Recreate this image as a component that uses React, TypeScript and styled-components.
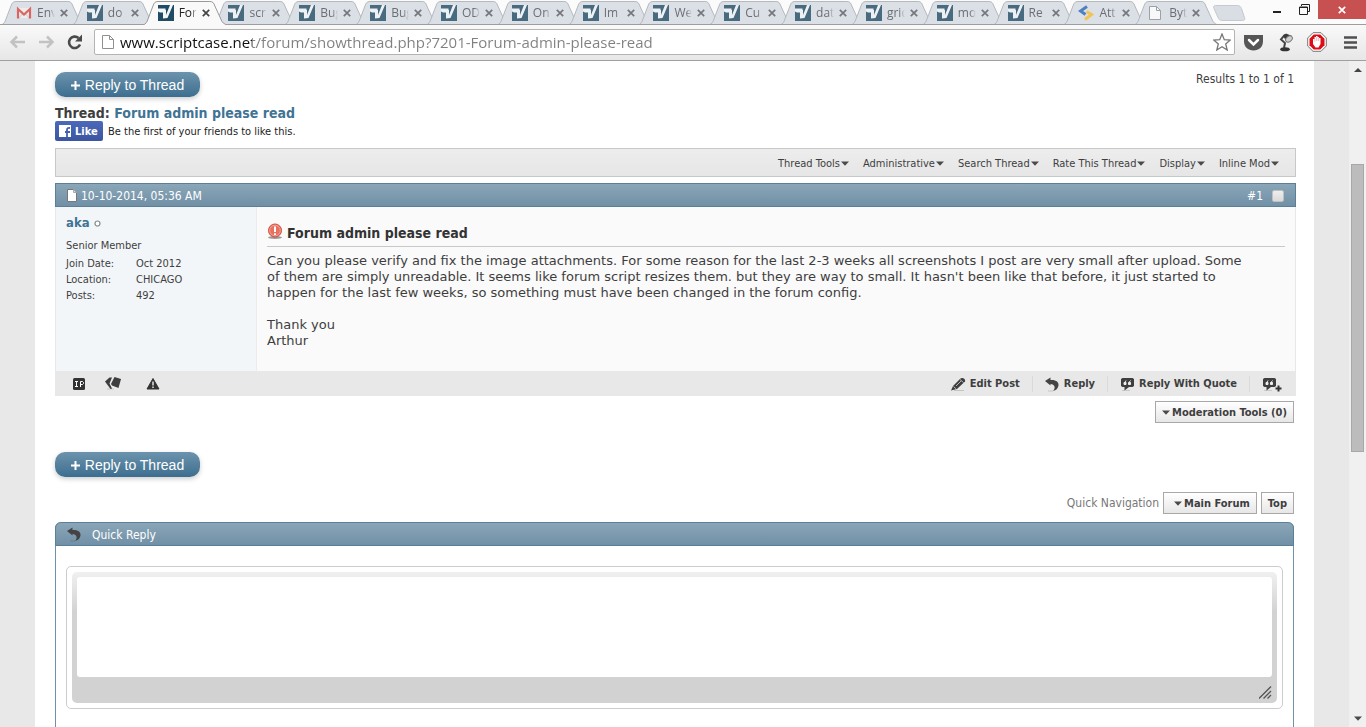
import React from "react";
import styled, { createGlobalStyle, css } from "styled-components";

const ui = '"Open Sans", "Noto Sans", sans-serif';
const tahoma = '"DejaVu Sans Condensed", "DejaVu Sans", sans-serif';
const verdana = '"DejaVu Sans", sans-serif';
const arial = '"Liberation Sans", Arial, sans-serif';

const GlobalStyle = createGlobalStyle`
  *, *::before, *::after { box-sizing: border-box; }
  body { margin: 0; font-family: ${tahoma}; font-size: 11px; color: #3e3e3e; }
  button, input, textarea { font: inherit; color: inherit; margin: 0; }
  button { border: 0; padding: 0; background: none; cursor: pointer; white-space: nowrap; }
  a { color: inherit; text-decoration: none; }
  svg { display: block; flex: none; }
  h1, h2, p, dl, dd, ul { margin: 0; padding: 0; }
`;

/* ---------- Browser frame ---------- */

const Window = styled.div`
  height: 100vh;
  display: flex;
  flex-direction: column;
  overflow: hidden;
  background: #fbfbfb;
`;

const TitleBar = styled.header`
  display: flex;
  height: 25px;
  flex: none;
  border-bottom: 1px solid #9d9d9d;
`;

const TabStrip = styled.nav`
  display: flex;
  flex: 1 1 0;
  max-width: 1205px;
  padding-left: 1px;
`;

const Tab = styled.div<{ $active?: boolean }>`
  position: relative;
  display: flex;
  align-items: center;
  flex: 1 1 0;
  min-width: 0;
  height: 25px;
  padding: 1px 0 0 15px;
  z-index: ${(p) => (p.$active ? 2 : 0)};
  color: ${(p) => (p.$active ? "#222" : "#6b6e74")};
`;

const TabShape = styled.svg`
  position: absolute;
  left: 0;
  top: 0;
  width: calc(100% + 14px);
  height: 25px;
`;

const TabIcon = styled.span<{ $dim?: boolean }>`
  position: relative;
  opacity: ${(p) => (p.$dim ? 0.78 : 1)};
`;

const TabTitle = styled.button<{ $indent?: boolean }>`
  position: relative;
  width: 23px;
  margin-left: ${(p) => (p.$indent ? 8 : 5)}px;
  text-align: left;
  font-family: ${ui};
  font-size: 12px;
  line-height: 18px;
  mask-image: linear-gradient(90deg, #000 12px, transparent 18px);
`;

const TabClose = styled.button`
  position: relative;
`;

const NewTab = styled.button`
  height: 20px;
  margin: 3px 0 0 7px;
`;

const WindowControls = styled.div`
  display: flex;
  margin-left: auto;
`;

const WindowButton = styled.button<{ $close?: boolean }>`
  display: flex;
  align-items: center;
  justify-content: center;
  width: ${(p) => (p.$close ? 48 : 27)}px;
  height: 19px;
  background: ${(p) => (p.$close ? "#c75050" : "transparent")};
`;

const NavBar = styled.div`
  display: flex;
  align-items: center;
  flex: none;
  height: 36px;
  padding: 0 9px 1px;
  background: linear-gradient(#f9f9f9, #e7e7e7);
  border-bottom: 1px solid #a0a0a0;
`;

const NavButton = styled.button`
  margin-right: 12px;
`;

const AddressBar = styled.label`
  display: flex;
  align-items: center;
  flex: 1;
  height: 26px;
  padding: 0 3px 0 7px;
  gap: 6px;
  background: #fff;
  border: 1px solid #b4b4b4;
  border-radius: 2px;
`;

const AddressInput = styled.input`
  flex: 1;
  min-width: 0;
  height: 24px;
  padding: 0;
  border: 0;
  outline: 0;
  font-family: ${ui};
  font-size: 15px;
  color: transparent;
  background: linear-gradient(90deg, #111 132px, #808080 132px);
  background-clip: text;
  -webkit-background-clip: text;
`;

const Extensions = styled.div`
  display: flex;
  align-items: center;
  gap: 13px;
  margin-left: 9px;
`;

const MainMenu = styled.button`
  margin-left: 4px;
`;

const Viewport = styled.div`
  display: flex;
  flex: 1;
  min-height: 0;
  background: #e8e8e8;
`;

const Scrollbar = styled.div`
  display: flex;
  flex-direction: column;
  align-items: center;
  flex: none;
  width: 17px;
  background: #f0f0f0;
`;

const ScrollArrow = styled.button`
  display: flex;
  align-items: center;
  justify-content: center;
  width: 17px;
  height: 17px;
`;

const ScrollSpace = styled.div<{ $grow: number }>`
  flex: ${(p) => p.$grow} 1 0;
`;

const ScrollThumb = styled.div`
  flex: 287 1 0;
  width: 13px;
  background: #bcbcbc;
  border: 1px solid #a8a8a8;
`;

/* ---------- Forum page ---------- */

const Page = styled.main`
  flex: 1;
  min-width: 0;
  margin: 0 35px;
  padding: 11px 20px 0;
  background: #fff;
  overflow: hidden;
`;

const Row = styled.div<{ $end?: boolean }>`
  display: flex;
  align-items: flex-start;
  justify-content: ${(p) => (p.$end ? "flex-end" : "space-between")};
`;

const ReplyButton = styled.button`
  display: flex;
  align-items: center;
  justify-content: center;
  gap: 5px;
  width: 145px;
  height: 25px;
  padding-top: 1px;
  border-radius: 10px;
  background: linear-gradient(#6c93ad, #3d6e8f);
  box-shadow: 0 2px 5px rgba(0, 0, 0, 0.2);
  color: #fff;
  font-family: ${arial};
  font-size: 14px;
`;

const Results = styled.span`
  font-size: 12px;
  line-height: 14px;
`;

const ThreadTitle = styled.h1`
  margin-top: 8px;
  font-size: 14px;
  line-height: 16px;
  font-weight: bold;

  a { color: #417394; }
`;

const LikeRow = styled.div`
  display: flex;
  align-items: center;
  gap: 5px;
  height: 20px;
  color: #222;
`;

const LikeButton = styled.button`
  display: flex;
  align-items: center;
  gap: 4px;
  width: 48px;
  height: 20px;
  padding-left: 4px;
  border-radius: 2px;
  background: linear-gradient(#4c69ba, #3b55a0);
  color: #fff;
  font-size: 11px;
  font-weight: bold;
`;

const Toolbar = styled.div`
  display: flex;
  align-items: center;
  justify-content: flex-end;
  gap: 14px;
  height: 29px;
  margin: 7px -2px 6px 0;
  padding: 2px 16px 0 0;
  border: 1px solid #c8c8c8;
  background: linear-gradient(#ededed, #e6e6e6);
`;

const MenuButton = styled.button`
  display: flex;
  align-items: center;
  gap: 1px;
`;

const barStyle = css`
  display: flex;
  align-items: center;
  height: 24px;
  border: 1px solid #5a7f97;
  background: linear-gradient(#8aa6b8, #7190a6);
  color: #fff;
  font-size: 12px;
`;

const Post = styled.article`
  margin-right: -2px;
`;

const PostHead = styled.div`
  ${barStyle}
  padding: 1px 11px 0;
  gap: 4px;
`;

const PostNumber = styled.a`
  margin: 0 5px 0 auto;
`;

const SelectBox = styled.input`
  appearance: none;
  width: 12px;
  height: 12px;
  border: 1px solid #c0c0c0;
  border-radius: 2px;
  background: linear-gradient(#eee, #dadada);
`;

const PostBody = styled.div`
  display: flex;
  min-height: 164px;
  border: solid #e8e8e8;
  border-width: 0 1px;
  background: #fafafa;
`;

const UserInfo = styled.aside`
  flex: none;
  width: 201px;
  padding: 8px 10px;
  border-right: 1px solid #ececec;
  background: #f2f6f9;
`;

const UserName = styled.a`
  display: flex;
  align-items: center;
  gap: 4px;
  color: #417394;
  font-size: 13px;
  line-height: 16px;
  font-weight: bold;
`;

const UserTitle = styled.p`
  margin: 7px 0 2px;
  line-height: 16px;
`;

const UserStats = styled.dl`
  display: grid;
  grid-template-columns: 70px 1fr;
  line-height: 16px;
`;

const PostContent = styled.div`
  flex: 1;
  min-width: 0;
  padding: 14px 10px 0;
`;

const PostTitle = styled.h2`
  display: flex;
  align-items: center;
  gap: 4px;
  height: 26px;
  padding-bottom: 1px;
  margin-bottom: 6px;
  border-bottom: 1px solid #c8c8c8;
  color: #333;
  font-size: 14px;
`;

const Message = styled.p`
  font-family: ${verdana};
  font-size: 13px;
  line-height: 16px;
  white-space: pre-line;
`;

const PostFoot = styled.div`
  display: flex;
  align-items: center;
  justify-content: space-between;
  height: 25px;
  padding: 0 14px 0 17px;
  background: #e8e8e8;
`;

const IconGroup = styled.div`
  display: flex;
  gap: 19px;
`;

const Actions = styled.div`
  display: flex;
  align-items: center;
`;

const Action = styled.button`
  display: flex;
  align-items: center;
  gap: 4px;
  padding: 1px 12px 0;
  border-right: 1px solid #dadada;
  font-weight: bold;
  line-height: 14px;

  &:last-child { padding-right: 0; border: 0; }
`;

const BoxButton = styled.button<{ $wide?: boolean }>`
  display: flex;
  align-items: center;
  gap: 2px;
  height: 22px;
  padding: 0 6px 0 ${(p) => (p.$wide ? 10 : 6)}px;
  border: 1px solid #a8a8a8;
  background: linear-gradient(#fff, #e7e7e7);
  font-weight: bold;
`;

const Moderation = styled(Row)`
  margin: 5px 0 29px;
`;

const QuickNav = styled(Row)`
  align-items: center;
  gap: 4px;
  margin: 15px 0 8px;
  color: #777;
  font-size: 12px;

  button { color: #3e3e3e; font-size: 11px; }
`;

const QuickReply = styled.section`
  min-height: 240px;
  border: solid #6f92a8;
  border-width: 0 1px;
  border-radius: 6px 6px 0 0;
`;

const QuickHead = styled.h2`
  ${barStyle}
  gap: 10px;
  margin: 0 -1px;
  padding: 1px 0 0 11px;
  border-radius: 6px 6px 0 0;
  font-weight: normal;
`;

const EditorFrame = styled.div`
  margin: 20px 10px;
  padding: 5px;
  border: 1px solid #ccc;
  border-radius: 5px;
`;

const Editor = styled.div`
  display: flex;
  flex-direction: column;
  padding: 5px 5px 0;
  border-radius: 5px;
  background: linear-gradient(#f0f0f0, #d2d2d2 40px);
`;

const EditorText = styled.textarea`
  display: block;
  width: 100%;
  height: 100px;
  padding: 4px;
  border: 0;
  outline: 0;
  border-radius: 3px;
  resize: none;
  background: #fff;
`;

const EditorFoot = styled.div`
  display: flex;
  align-items: center;
  justify-content: flex-end;
  height: 26px;
  padding-top: 4px;
`;

/* ---------- Drawings ---------- */

const Caret = () => (
  <svg width="8" height="5" viewBox="0 0 8 5"><path d="M0 .5h8L4 4.800z" fill="#4a4a4a" /></svg>
);

const Favicon = () => (
  <svg width="16" height="16" viewBox="0 0 16 16">
    <path d="M0 0h16v16H0z" fill="#1f4b64" />
    <path d="M0 3h8v7L12 0h3L9.500 13 5 13.500V7.500H2L0 6.500z" fill="#f4f7f9" />
    <path d="M0 0h11L9 5H7.500V3.500H0z" fill="#1f4b64" />
  </svg>
);

const Gmail = () => (
  <svg width="16" height="16" viewBox="0 0 16 16">
    <path d="M2 3h12v10H2z" fill="#f3efee" />
    <path d="M3 13l4-5M13 13L9 8" stroke="#c9c4c4" fill="none" />
    <path d="M2 13.500V4l6 5.500L14 4v9.500" stroke="#d9453c" strokeWidth="2.200" fill="none" />
  </svg>
);

const Sublime = () => (
  <svg width="16" height="16" viewBox="0 0 16 16" fill="none" strokeWidth="3">
    <path d="M9 1.500L2.500 6l5 3.500" stroke="#2466b8" />
    <path d="M8.500 6.500l5 3L7 14.500" stroke="#fbbc2c" />
  </svg>
);

const PageGlyph = ({ fill = "#fff", line = "#8f8f8f" }: { fill?: string; line?: string }) => (
  <svg width="12" height="16" viewBox="0 0 12 16">
    <path d="M.5 1.500h7l4 4v9H.5z" fill={fill} stroke={line} />
    <path d="M7.500 1.500v4h4" fill="none" stroke={line} />
  </svg>
);

const PostGlyph = () => (
  <svg width="10" height="13" viewBox="0 0 10 13">
    <path d="M.5.5h6l3 3v9h-9z" fill="#fff" stroke="#777" />
    <path d="M6.500.5v3h3" fill="#ddd" stroke="#aaa" />
  </svg>
);

const CloseGlyph = ({ color }: { color: string }) => (
  <svg width="8" height="8" viewBox="0 0 8 8">
    <path d="M.8.8l6.400 6.400M7.200.8L.8 7.200" stroke={color} strokeWidth="1.700" />
  </svg>
);

const ReplyArrow = () => (
  <svg width="15" height="15" viewBox="0 0 15 15">
    <path d="M3 14h5" stroke="#000" strokeOpacity=".15" />
    <path d="M0 4L5.500.5V3C11 2.500 14 5 13.500 8.500 13 11.500 11 13.500 8 14c2.500-2.500 2.500-6.500-2.500-7V8.500z" fill="#444" />
  </svg>
);

const QuoteGlyph = ({ plus }: { plus?: boolean }) => (
  <svg width={plus ? 20 : 15} height="15" viewBox={plus ? "0 0 20 15" : "0 0 15 15"}>
    <path d="M2 13.500h8" stroke="#cacaca" />
    <path d="M2.500 1h10L14 2v7l-1.500 1H9L4.500 13.500V10h-2L1 9V2z" fill="#3f3f3f" />
    <path d="M4 5.500h2v2H4zM6 3.500L4.700 5.500M8.500 5.500h2v2h-2zM10.500 3.500L9 5.500" fill="#eee" stroke="#eee" />
    {plus && <path d="M16.500 8.500v6M13.500 11.500h6" stroke="#333" strokeWidth="2" />}
  </svg>
);

const Pencil = () => (
  <svg width="15" height="15" viewBox="0 0 15 15">
    <path d="M3 13.500h10" stroke="#c4c4c4" />
    <path d="M0 13.500L2 9 9.500 1.500c1.500-1.500 5.500.5 4.500 3L6 12z" fill="#3f3f3f" />
    <path d="M9 2.500l3.500 3M2.500 9.500L5 11.800M5 9l5-5" stroke="#d5d5d5" strokeWidth=".8" />
  </svg>
);

const tabs: { title: string; icon?: "gmail" | "sublime" | "page" }[] = [
  { title: "Env", icon: "gmail" },
  { title: "do" },
  { title: "For" },
  { title: "scr" },
  { title: "Bug" },
  { title: "Bug" },
  { title: "OD" },
  { title: "On" },
  { title: "Im" },
  { title: "We" },
  { title: "Cu" },
  { title: "dat" },
  { title: "grid" },
  { title: "mo" },
  { title: "Re" },
  { title: "Att", icon: "sublime" },
  { title: "Byt", icon: "page" },
];

const menus = ["Thread Tools", "Administrative", "Search Thread", "Rate This Thread", "Display", "Inline Mod"];

const message = `Can you please verify and fix the image attachments. For some reason for the last 2-3 weeks all screenshots I post are very small after upload. Some
of them are simply unreadable. It seems like forum script resizes them. but they are way to small. It hasn't been like that before, it just started to
happen for the last few weeks, so something must have been changed in the forum config.

Thank you
Arthur`;

const icons = { gmail: <Gmail />, sublime: <Sublime />, page: <PageGlyph /> };

const BrowserTab = ({ title, icon, active }: { title: string; icon?: keyof typeof icons; active: boolean }) => (
  <Tab $active={active}>
    <TabShape viewBox="0 0 85 25" preserveAspectRatio="none">
      <path
        d="M0 25C3 24 4 22 5 19L10 6C11 3 12 1.500 15 1.500H67C70 1.500 71 3 72 6L78 19C79 22 81 24.500 85 25"
        fill={active ? "#f9f9f9" : "#dbdfe6"}
        stroke={active ? "#999" : "#b5b8bd"}
      />
      {!active && <path d="M0 24.500h85" stroke="#9d9d9d" />}
    </TabShape>
    <TabIcon $dim={!active}>{icon ? icons[icon] : <Favicon />}</TabIcon>
    <TabTitle $indent={icon === "page"}>{title}</TabTitle>
    <TabClose aria-label={`Close ${title}`}><CloseGlyph color={active ? "#444" : "#74777c"} /></TabClose>
  </Tab>
);

const ReplyToThread = () => (
  <ReplyButton>
    <svg width="9" height="9" viewBox="0 0 9 9"><path d="M4.500 0v9M0 4.500h9" stroke="#fff" strokeWidth="2" /></svg>
    Reply to Thread
  </ReplyButton>
);

export default function App() {
  return (
    <Window>
      <GlobalStyle />
      <TitleBar>
        <TabStrip>
          {tabs.map((t, i) => <BrowserTab key={i} {...t} active={i === 2} />)}
        </TabStrip>
        <NewTab aria-label="New tab">
          <svg width="34" height="18" viewBox="0 0 34 18">
            <path d="M3.500 1.500h22c2 0 3 1 4 3l3 9c1 2 0 3-2 3H10c-2 0-3-1-4-3l-4-9c-1-2 0-3 1.500-3z" fill="#d9dde4" stroke="#c6c9ce" />
          </svg>
        </NewTab>
        <WindowControls>
          <WindowButton aria-label="Minimize">
            <svg width="9" height="9" viewBox="0 0 9 9"><path d="M0 7h8" stroke="#222" strokeWidth="2" /></svg>
          </WindowButton>
          <WindowButton aria-label="Restore">
            <svg width="11" height="11" viewBox="0 0 11 11" fill="none" stroke="#222">
              <path d="M2.500 2V.5h8v7H9" /><path d="M.5 3h8v7.500h-8zM0 3.500h9" />
            </svg>
          </WindowButton>
          <WindowButton $close aria-label="Close window"><CloseGlyph color="#fff" /></WindowButton>
        </WindowControls>
      </TitleBar>

      <NavBar>
        <NavButton aria-label="Back">
          <svg width="17" height="14" viewBox="0 0 17 14"><path d="M16 7H3M8 1.500L2.500 7 8 12.500" stroke="#c2c2c2" strokeWidth="2.500" fill="none" /></svg>
        </NavButton>
        <NavButton aria-label="Forward">
          <svg width="17" height="14" viewBox="0 0 17 14"><path d="M1 7h13M9 1.500L14.500 7 9 12.500" stroke="#c2c2c2" strokeWidth="2.500" fill="none" /></svg>
        </NavButton>
        <NavButton aria-label="Reload">
          <svg width="15" height="16" viewBox="0 0 15 16">
            <path d="M13 10.500A5.700 5.700 0 1 1 11.500 4" stroke="#4a4a4a" strokeWidth="2.600" fill="none" />
            <path d="M15 .5v7H8z" fill="#4a4a4a" />
          </svg>
        </NavButton>
        <AddressBar>
          <PageGlyph />
          <AddressInput aria-label="Address" defaultValue="www.scriptcase.net/forum/showthread.php?7201-Forum-admin-please-read" />
          <svg width="18" height="18" viewBox="0 0 18 18">
            <path d="M9 1l2.300 5.700 6 .4-4.600 3.900 1.500 6L9 13.700 3.800 17l1.500-6L.7 7.100l6-.4z" fill="#fff" stroke="#777" strokeWidth="1.300" />
          </svg>
        </AddressBar>
        <Extensions>
          <button aria-label="Pocket">
            <svg width="19" height="17" viewBox="0 0 19 17">
              <path d="M0 1h19v6c0 6-4 9.500-9.500 9.500S0 13 0 7z" fill="#565656" />
              <path d="M5 6l4.500 4.500L14 6" stroke="#fff" strokeWidth="2.500" fill="none" strokeLinecap="round" />
            </svg>
          </button>
          <button aria-label="Desk lamp">
            <svg width="18" height="20" viewBox="0 0 18 20">
              <path d="M9 2.500L5 7.500l4 3.500-1 5" stroke="#444" strokeWidth="2" fill="none" />
              <path d="M7 4l3-2.500 6 2.500-5 6z" fill="#3a3a3a" />
              <ellipse cx="13" cy="7" rx="3.700" ry="2.600" transform="rotate(-38 13 7)" fill="#cfcfcf" stroke="#777" />
              <ellipse cx="9" cy="17.300" rx="4.800" ry="2" fill="#333" />
            </svg>
          </button>
          <button aria-label="AdBlock">
            <svg width="20" height="20" viewBox="0 0 20 20">
              <path d="M6 .7h8L19.300 6v8L14 19.300H6L.7 14V6z" fill="#fff" stroke="#777" />
              <path d="M6.700 2.500h6.600l4.200 4.200v6.600l-4.200 4.200H6.700l-4.200-4.200V6.700z" fill="#dc0d17" />
              <path d="M6 9.500V7h1.500V5H9V4h1.500v1H12v1h1.500v6l-2 3.500H8.500L6 12z" fill="#fff" />
              <path d="M7.800 6.500v3M9.700 5v4M11.600 6v3" stroke="#dc8b8e" strokeWidth=".6" />
            </svg>
          </button>
          <MainMenu aria-label="Menu">
            <svg width="13" height="13" viewBox="0 0 13 13"><path d="M0 1.500h13M0 6.500h13M0 11.500h13" stroke="#505050" strokeWidth="2.600" /></svg>
          </MainMenu>
        </Extensions>
      </NavBar>

      <Viewport>
        <Page>
          <Row>
            <ReplyToThread />
            <Results>Results 1 to 1 of 1</Results>
          </Row>
          <ThreadTitle>Thread: <a href="#thread">Forum admin please read</a></ThreadTitle>
          <LikeRow>
            <LikeButton>
              <svg width="12" height="12" viewBox="0 0 12 12">
                <path d="M0 0h12v12H0z" fill="#fff" />
                <path d="M8 12V7h-2M8 7V5c0-1.700.7-2.300 3-2M8 7h3" stroke="#435fb0" strokeWidth="1.800" fill="none" />
              </svg>
              Like
            </LikeButton>
            <span>Be the first of your friends to like this.</span>
          </LikeRow>

          <Toolbar>
            {menus.map((m) => <MenuButton key={m}>{m}<Caret /></MenuButton>)}
          </Toolbar>

          <Post>
            <PostHead>
              <PostGlyph />
              <span>10-10-2014, 05:36 AM</span>
              <PostNumber href="#post1">#1</PostNumber>
              <SelectBox type="checkbox" aria-label="Select post" />
            </PostHead>
            <PostBody>
              <UserInfo>
                <UserName href="#aka">
                  aka
                  <svg width="7" height="7" viewBox="0 0 7 7"><circle cx="3.500" cy="3.500" r="2.500" fill="#fff" stroke="#8a8a8a" strokeWidth="1.200" /></svg>
                </UserName>
                <UserTitle>Senior Member</UserTitle>
                <UserStats>
                  <dt>Join Date:</dt><dd>Oct 2012</dd>
                  <dt>Location:</dt><dd>CHICAGO</dd>
                  <dt>Posts:</dt><dd>492</dd>
                </UserStats>
              </UserInfo>
              <PostContent>
                <PostTitle>
                  <svg width="16" height="22" viewBox="0 0 16 22">
                    <ellipse cx="8" cy="15.500" rx="7" ry="1.500" fill="#999" />
                    <circle cx="8" cy="8.500" r="6.500" fill="#e8705e" stroke="#cf4b3c" />
                    <circle cx="8" cy="8.500" r="5.300" fill="none" stroke="#f4b0a4" strokeWidth=".8" />
                    <path d="M8 4.500V10M8 11.300v1.700" stroke="#fff" strokeWidth="2" />
                  </svg>
                  Forum admin please read
                </PostTitle>
                <Message>{message}</Message>
              </PostContent>
            </PostBody>
            <PostFoot>
              <IconGroup>
                <button aria-label="View IP address">
                  <svg width="14" height="15" viewBox="0 0 14 15">
                    <rect x="1" y="2" width="12" height="12" rx="1.500" fill="#333" />
                    <path d="M3 5.500h3M4.500 5.500v5M3 10.500h3M8.500 11V5.500h2l1 1v1l-1 1h-2" stroke="#fff" fill="none" />
                  </svg>
                </button>
                <button aria-label="Infractions">
                  <svg width="18" height="15" viewBox="0 0 18 15">
                    <path d="M2 13h7" stroke="#c8c8c8" />
                    <path d="M0 5.500L4.500 1.500 7 1.500 4.500 7.500 7 12.500 5.500 13z" fill="#3d3d3d" />
                    <path d="M9.500 1l6.500 2-2.500 9L7 9.500 6 8z" fill="#3d3d3d" />
                  </svg>
                </button>
                <button aria-label="Report post">
                  <svg width="22" height="15" viewBox="0 0 22 15">
                    <path d="M11 2.500l6 10.500H5z" fill="#333" stroke="#333" strokeLinejoin="round" />
                    <path d="M11 5.500v4M11 10.500V12" stroke="#fff" strokeWidth="1.300" />
                  </svg>
                </button>
              </IconGroup>
              <Actions>
                <Action><Pencil />Edit Post</Action>
                <Action><ReplyArrow />Reply</Action>
                <Action><QuoteGlyph />Reply With Quote</Action>
                <Action aria-label="Multi-quote"><QuoteGlyph plus /></Action>
              </Actions>
            </PostFoot>
          </Post>

          <Moderation $end>
            <BoxButton><Caret />Moderation Tools (0)</BoxButton>
          </Moderation>
          <ReplyToThread />
          <QuickNav $end>
            <span>Quick Navigation</span>
            <BoxButton $wide><Caret />Main Forum</BoxButton>
            <BoxButton>Top</BoxButton>
          </QuickNav>

          <QuickReply>
            <QuickHead><ReplyArrow />Quick Reply</QuickHead>
            <EditorFrame>
              <Editor>
                <EditorText aria-label="Quick reply message" />
                <EditorFoot>
                  <svg width="13" height="13" viewBox="0 0 13 13"><path d="M0 12.500L12 .5M4.500 12.500L12 5M8.500 12.500L12 9" stroke="#555" strokeWidth="1.300" /></svg>
                </EditorFoot>
              </Editor>
            </EditorFrame>
          </QuickReply>
        </Page>
        <Scrollbar>
          <ScrollArrow aria-label="Scroll up"><svg width="8" height="4" viewBox="0 0 8 4"><path d="M0 4h8L4 0z" fill="#444" /></svg></ScrollArrow>
          <ScrollSpace $grow={87} />
          <ScrollThumb />
          <ScrollSpace $grow={260} />
          <ScrollArrow aria-label="Scroll down"><Caret /></ScrollArrow>
        </Scrollbar>
      </Viewport>
    </Window>
  );
}
